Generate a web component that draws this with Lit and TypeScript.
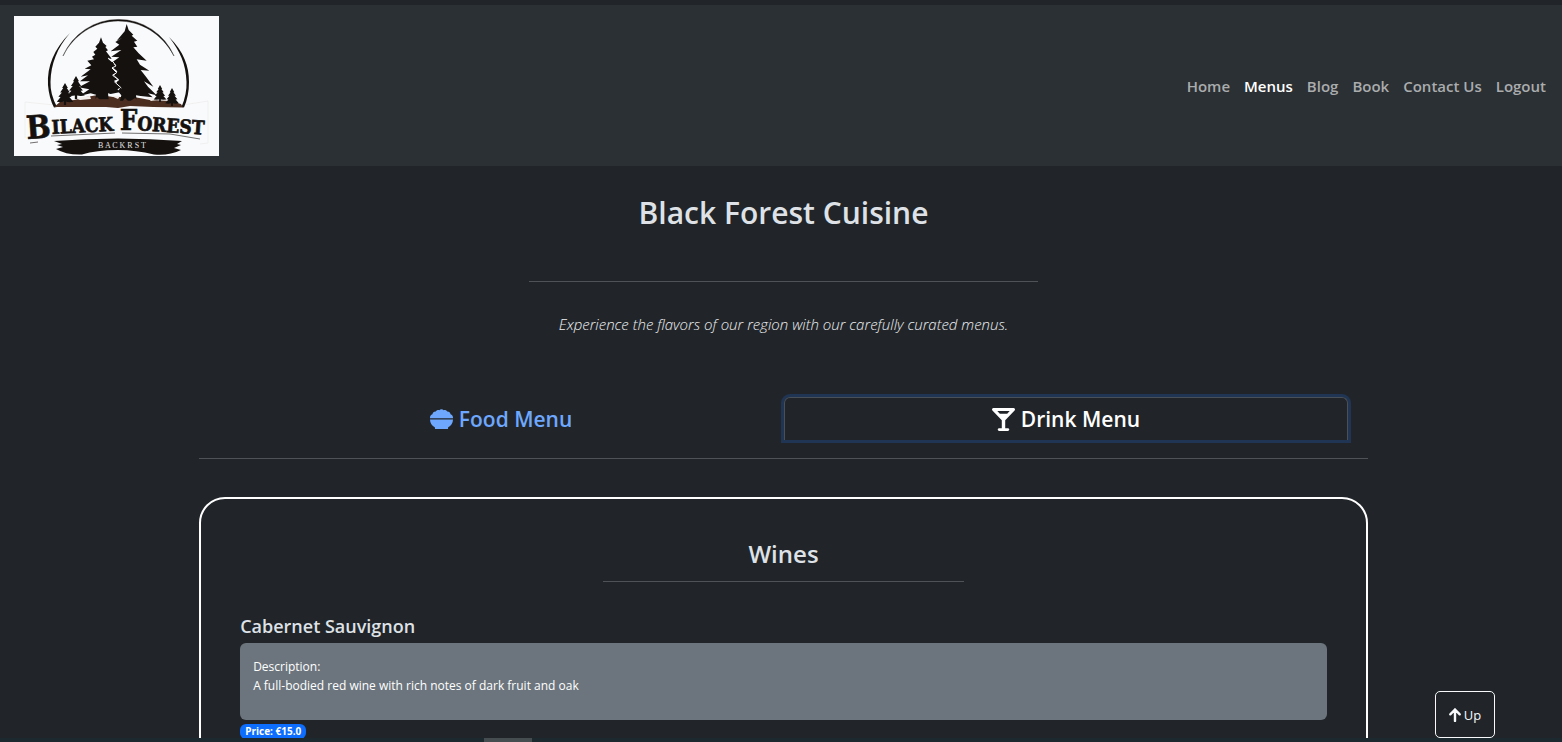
import { LitElement, html, css, svg } from "lit";
import { customElement, property, state } from "lit/decorators.js";

interface Drink {
  name: string;
  description: string;
  price: string;
}

const links = ["Home", "Menus", "Blog", "Book", "Contact Us", "Logout"];

const wines: Drink[] = [
  {
    name: "Cabernet Sauvignon",
    description: "A full-bodied red wine with rich notes of dark fruit and oak",
    price: "€15.0",
  },
];

@customElement("forest-logo")
export class ForestLogo extends LitElement {
  static styles = css`
    :host {
      display: block;
      width: 205px;
      height: 140px;
    }
    .art {
      display: block;
      width: 100%;
      height: 100%;
    }
    .name {
      font-family: "DejaVu Serif Condensed", "DejaVu Serif", serif;
      font-stretch: condensed;
      font-weight: 700;
      fill: #14110f;
      stroke: #14110f;
      stroke-width: 0.7px;
    }
    .tag {
      font-family: "Liberation Serif", serif;
      font-size: 8px;
      fill: #e4e4e4;
    }
  `;

  private sapling(x: number, y: number, h: number) {
    const s = h / 20;
    return svg`<path transform="translate(${x} ${y}) scale(${s})" fill="#14110f"
      d="M0 0L2.6 4.6L1.6 4.6L4.4 8.6L2.8 8.6L6 12.6L4 12.8L7.6 17L4 17.4L1 17L1 20H-1V17L-4.4 17.4L-7.4 17L-4 12.8L-6 12.6L-2.8 8.6L-4.4 8.6L-1.6 4.6L-2.6 4.6Z"/>`;
  }

  render() {
    return html`
      <svg class="art" viewBox="0 0 205 140" role="img" aria-label="Black Forest">
        <rect width="205" height="140" fill="#f9fafc" />
        <path d="M11 86L40 89M11 86V122M169 89L194 85V127L186 128" fill="none" stroke="#ecebea" stroke-width=".7" />
        <path d="M49 40A60.4 60.4 0 0 1 160 40C148 17.500 127 5 104 5C80 5 59 19.500 49 40Z" fill="#14110f" stroke="#14110f" stroke-width=".4" />
        <path d="M56 17C40 33 33 50 34 69Q35 82 40 91.500L43 91Q36 78 36.500 66C37 48 43 32 56 17Z" fill="#14110f" />
        <path d="M155 21C170 36 175 50 175 66Q175 80 170 91.500L167.500 91Q173 78 172.500 66C172 48 166 35 155 21Z" fill="#14110f" />
        <path d="M40 91L46 86L60 84L72 81L84 79L100 81L120 81L136 84L156 85L167 88L169 91.500L139 91L116 90L104 92L92 91L66 91Z" fill="#4b2e20" />
        <path d="M60 82L76 80L77 83L66 84ZM132 81L148 83L137 85ZM97 80L106 80L104 83Z" fill="#f2eeeb" />
        ${this.sapling(51, 67, 22)} ${this.sapling(62, 60, 23)} ${this.sapling(146, 69, 17)}
        ${this.sapling(158, 72, 18)}
        <g transform="translate(30 0) scale(.3333)" fill="#14110f">
          <path
            d="M171 64L177 80L188 90L184 93L192 103L186 106L203 128L192 128L206 140L214 150L204 154L218 170L206 176L222 190L210 194L232 214L220 220L230 228L200 234L192 232L194 250H154L156 236L140 232L106 240L136 220L104 214L138 196L108 196L132 178L110 182L140 160L122 158L142 148L130 134L150 130L144 122L154 116L148 108L160 98L154 92L165 80Z"
          />
          <path
            d="M248 24L254 42L268 56L263 59L280 74L270 77L280 92L268 94L284 112L308 134L278 130L288 146L316 164L290 162L306 182L328 212L300 196L312 212L338 238L312 232L326 244L290 240L276 238L278 254H228L232 238L222 226L230 214L214 206L224 190L210 178L220 166L204 152L216 146L200 142L226 124L202 122L232 102L200 106L226 86L214 78L234 66L218 74L242 46Z"
          />
          <path d="M192 126L206 136L216 150L204 156L218 170L206 178L224 192L212 198L232 216" fill="none" stroke="#f9fafc" stroke-width="3" />
        </g>
        <path d="M80 84L83 81L87 85ZM108 86L111 82L115 86L121 82L126 86Z" fill="#4b2e20" />
        <g class="name">
          <text font-size="32" transform="translate(13 123) rotate(-4)">B</text>
          <text font-size="19" transform="translate(38 118) rotate(-3)">ILACK</text>
          <text font-size="27" transform="translate(106 114)">F</text>
          <text font-size="19" transform="translate(123 114) rotate(4)">OREST</text>
        </g>
        <path d="M16 127L24 126M37 120L101 117M108 117L156 118L186 123" fill="none" stroke="#14110f" stroke-width=".6" />
        <path
          fill="#14110f"
          d="M40 125Q104 120 168 125L163 128L167 129L160 132L167 134Q155 140 140 138.500Q122 134 104 134Q82 134 68 138.500Q52 139 42 133L49 131L43 129L48 128Z"
        />
        <text class="tag" x="84" y="132">B A C K R S T</text>
      </svg>
    `;
  }
}

@customElement("drink-item")
export class DrinkItem extends LitElement {
  @property({ attribute: false }) drink!: Drink;

  static styles = css`
    :host {
      display: block;
    }
    .name {
      margin: 0 0 6px;
      font-size: 18px;
      line-height: 22px;
      font-weight: 600;
    }
    .box {
      min-height: 50px;
      padding: 14px 13px 13px;
      border-radius: 6px;
      background: #6c757d;
      color: #fff;
      font-size: 12px;
      line-height: 19px;
    }
    .box p {
      margin: 0;
    }
    .price {
      display: block;
      width: fit-content;
      margin-top: 4px;
      padding: 0 5px;
      border-radius: 6px;
      background: #0d6efd;
      color: #fff;
      font-size: 10px;
      line-height: 15px;
      font-weight: 700;
    }
  `;

  render() {
    return html`
      <h4 class="name">${this.drink.name}</h4>
      <div class="box">
        <p>Description:</p>
        <p>${this.drink.description}</p>
      </div>
      <span class="price">Price: ${this.drink.price}</span>
    `;
  }
}

@customElement("app-root")
export class AppRoot extends LitElement {
  @state() private tab = "drink";

  static styles = css`
    :host {
      display: flex;
      flex-direction: column;
      position: relative;
      height: 100vh;
      overflow: hidden;
      background: #212529;
      color: #dee2e6;
      font-family: "Open Sans", "Noto Sans", sans-serif;
    }
    .edge {
      flex: none;
      height: 5px;
      background: #212429;
    }
    .bar {
      flex: none;
      display: flex;
      align-items: center;
      justify-content: space-between;
      padding: 11px 16px 10px 14px;
      background: #2b3034;
    }
    .links {
      display: flex;
      gap: 14px;
      font-size: 15px;
      line-height: 24px;
      font-weight: 600;
    }
    .link {
      color: #aaacae;
      text-decoration: none;
    }
    .link.on {
      color: #fff;
    }
    .page {
      flex: 1;
      min-height: 0;
      overflow: hidden;
      padding-left: 5px;
    }
    .title {
      margin: 28px 0 0;
      font-size: 30px;
      line-height: 38px;
      font-weight: 600;
      text-align: center;
    }
    .rule {
      height: 1px;
      margin: 0 auto;
      border: 0;
      background: #4f5357;
    }
    .rule.wide {
      width: 509px;
      max-width: 80%;
      margin-top: 49px;
    }
    .lead {
      margin: 30px 0 0;
      color: #eef0f2;
      font-size: 15px;
      line-height: 24px;
      font-style: italic;
      font-weight: 300;
      text-align: center;
    }
    .body {
      width: calc(75% + 1px);
      margin: 61px auto 0;
    }
    .tabs {
      display: grid;
      grid-template-columns: 1fr 1fr;
      gap: 1px;
      padding: 0 20px 18px;
      border-bottom: 1px solid #4f5357;
    }
    .tab {
      display: flex;
      align-items: center;
      justify-content: center;
      gap: 6px;
      height: 43px;
      padding: 0;
      border: 1px solid transparent;
      border-bottom: 0;
      border-radius: 6px 6px 0 0;
      background: none;
      color: #6ea8fe;
      font: 600 21px/32px "Open Sans", "Noto Sans", sans-serif;
    }
    .tab.on {
      border-color: #495057;
      color: #fff;
      box-shadow: 0 0 0 3px #203554;
      outline: none;
    }
    .glyph {
      width: 23px;
      height: 23px;
      fill: currentColor;
    }
    .card {
      margin-top: 38px;
      padding: 39px 39px 60px;
      border: 2px solid #fff;
      border-radius: 26px;
    }
    .kind {
      margin: 0;
      font-size: 24px;
      line-height: 32px;
      font-weight: 600;
      text-align: center;
    }
    .rule.short {
      width: 33.3%;
      margin-top: 11px;
      margin-bottom: 33px;
    }
    .up {
      position: absolute;
      right: 67px;
      bottom: 4px;
      display: flex;
      align-items: center;
      justify-content: center;
      gap: 3px;
      width: 60px;
      height: 47px;
      padding: 0;
      border: 1px solid #f8f9fa;
      border-radius: 5px;
      background: #212529;
      color: #f8f9fa;
      font: 400 13px/20px "Open Sans", "Noto Sans", sans-serif;
    }
    .arrow {
      width: 12px;
      height: 14px;
      fill: none;
      stroke: currentColor;
      stroke-width: 2.4;
      stroke-linecap: round;
      stroke-linejoin: round;
    }
    .foot {
      flex: none;
      height: 4px;
      padding-left: 31%;
      background: #1c2a2f;
    }
    .thumb {
      width: 48px;
      height: 4px;
      background: #454d51;
    }
  `;

  render() {
    return html`
      <div class="edge"></div>
      <header class="bar">
        <forest-logo></forest-logo>
        <nav class="links">
          ${links.map(
            (l) => html`<a class="link ${l === "Menus" ? "on" : ""}" href="#">${l}</a>`
          )}
        </nav>
      </header>
      <main class="page">
        <h1 class="title">Black Forest Cuisine</h1>
        <hr class="rule wide" />
        <p class="lead">Experience the flavors of our region with our carefully curated menus.</p>
        <div class="body">
          <div class="tabs" role="tablist">
            <button
              class="tab ${this.tab === "food" ? "on" : ""}"
              role="tab"
              aria-selected=${this.tab === "food"}
              @click=${() => (this.tab = "food")}
            >
              <svg class="glyph" viewBox="0 0 512 512" aria-hidden="true">
                <path
                  d="M0 218C0 176 20 146 54 138C58 98 92 72 130 76C144 48 180 36 208 48C228 24 284 24 304 48C332 36 368 48 382 76C420 72 454 98 458 138C492 146 512 176 512 218V228H0ZM0 256H512C512 340 466 396 404 428V444Q404 470 380 470H132Q108 470 108 444V428C46 396 0 340 0 256Z"
                />
              </svg>
              Food Menu
            </button>
            <button
              class="tab ${this.tab === "drink" ? "on" : ""}"
              role="tab"
              aria-selected=${this.tab === "drink"}
              @click=${() => (this.tab = "drink")}
            >
              <svg class="glyph" viewBox="0 0 512 512" aria-hidden="true">
                <path
                  d="M32 0C19 0 8 8 3 20S1 46 9 55L218 272V448H160C142 448 128 462 128 480S142 512 160 512H352C370 512 384 498 384 480S370 448 352 448H294V272L503 55C512 46 514 32 510 20S493 0 480 0ZM174 128L118 68H394L338 128Z"
                />
              </svg>
              Drink Menu
            </button>
          </div>
          <section class="card">
            <h2 class="kind">Wines</h2>
            <hr class="rule short" />
            ${wines.map((w) => html`<drink-item .drink=${w}></drink-item>`)}
          </section>
        </div>
      </main>
      <div class="foot"><div class="thumb"></div></div>
      <button class="up">
        <svg class="arrow" viewBox="0 0 12 14" aria-hidden="true">
          <path d="M6 13V1.500M1.300 6.300L6 1.500L10.700 6.300" />
        </svg>
        Up
      </button>
    `;
  }
}
